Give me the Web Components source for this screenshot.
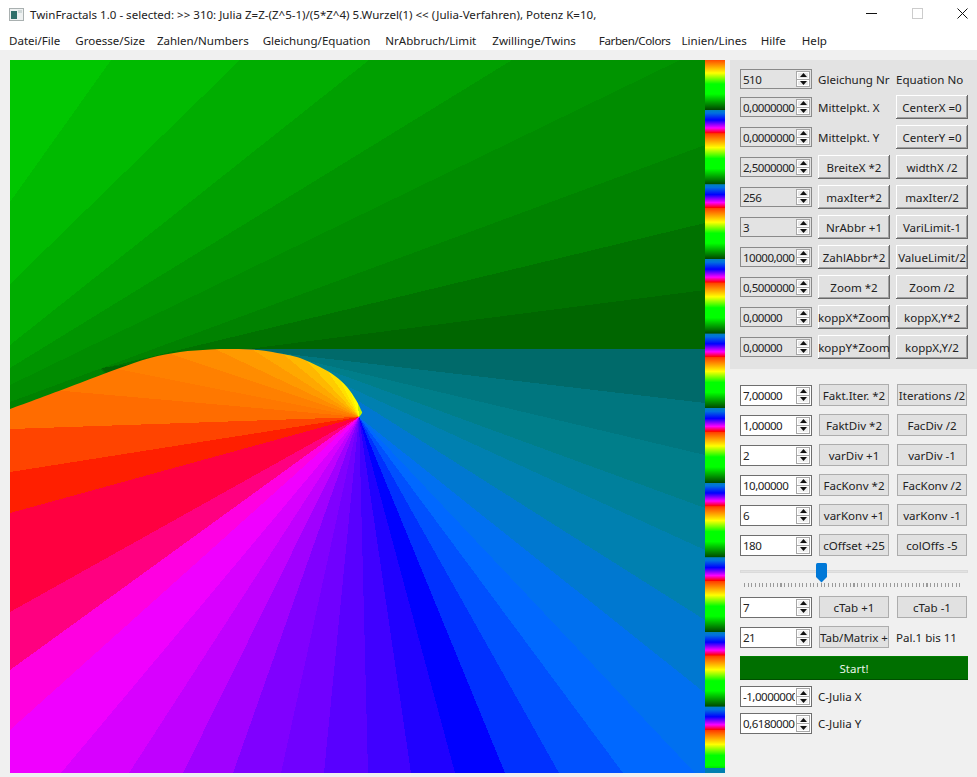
<!DOCTYPE html>
<html><head><meta charset="utf-8"><title>TwinFractals</title>
<style>html,body{margin:0;padding:0;background:#f0f0f0}</style></head>
<body><tf-window></tf-window>
<script>
const FONT = '"Noto Sans","Open Sans","Liberation Sans",sans-serif';
const FS = '11.55px';
class TfTitlebar extends HTMLElement{constructor(){super();this.attachShadow({mode:'open'}).innerHTML=`<style>
:host{display:flex;align-items:center;height:30px;background:#fff;color:#222;font:${FS} ${FONT};position:relative}
svg{display:block;flex:none}
.ic{margin:0 6px 2px 9px}.t{flex:1;white-space:nowrap;margin-bottom:2px}
.c{width:11px;height:11px;display:block;margin:0 0 4px 34.5px}
.c:last-child{margin-right:9px}
</style>
<svg class="ic" width="15" height="13" viewBox="0 0 15 13"><rect x=".5" y=".5" width="14" height="12" fill="#eef1f1" stroke="#a9b0b0"/><rect x="2" y="3" width="6" height="8" fill="#2f6f6a"/><rect x="9" y="2" width="4" height="3" fill="#cfd8d8"/></svg>
<span class="t"><slot></slot></span>
<svg class="c" width="11" height="11"><path d="M0 5.500H11" stroke="#111"/></svg>
<svg class="c" width="11" height="11"><rect x=".5" y=".5" width="10" height="10" fill="none" stroke="#ccc"/></svg>
<svg class="c" width="11" height="11"><path d="M.5.5L10.500 10.500M10.500.5L.5 10.500" stroke="#111" fill="none"/></svg>`}}
class TfMenubar extends HTMLElement{constructor(){super();this.attachShadow({mode:'open'}).innerHTML=`<style>
:host{display:flex;box-sizing:border-box;height:20px;background:#fff;color:#222;font:${FS}/20px ${FONT};padding:1px 0 0 9px;gap:16px;white-space:nowrap}
</style><slot></slot>`}}
class TfMenuItem extends HTMLElement{constructor(){super();this.attachShadow({mode:'open'}).innerHTML=`<style>:host{display:block}</style><slot></slot>`}}
class TfFractal extends HTMLElement{constructor(){super();
 const X0=10,Y0=60,R=705,B=773,A=[359,417];
 const pts=a=>a.map(p=>p.join(',')).join(' ');
 const poly=(a,c)=>`<polygon points="${pts(a)}" fill="${c}"/>`;
 let s='';
 s+=`<rect x="10" y="60" width="695" height="440" fill="#00c600"/>`;
 const green=[[[111,60],[10,202],'#00ba00'],[[240,60],[10,284],'#00ad00'],[[369,60],[10,345],'#00a000'],[[512,60],[10,368],'#009400'],[[680,60],[10,385],'#008c00'],[[705,145],[10,402],'#008200'],[[705,223],[100,369],'#007200'],[[705,290],[101,368],'#006600']];
 for(const [S,E,c] of green){const a=[S];if(S[1]===60)a.push([R,60]);a.push([R,349],[233,349],[233,500]);if(E[0]===X0)a.push([X0,500]);a.push(E);s+=poly(a,c)}
 s+=poly([[233,349],[R,349],[R,B],[233,B]],'#006a6a');
 const rays=[[[270,352],[R,403],'#00767f'],[[300,359],[R,455],'#007e8a'],[[320,367],[R,508],'#00809c'],[[340,383],[R,550],'#0080b0'],[[352,397],[R,620],'#0078d0'],[A,[R,693],'#0070f0']];
 const bottom=[[695,'#0068ff'],[623,'#0050ff'],[559,'#0030ff'],[505,'#0000ff'],[455,'#2000ff'],[411,'#4000ff'],[368,'#5800ff'],[324,'#7000ff'],[281,'#8000ff'],[233,'#a000ff'],[183,'#c000ff'],[129,'#d800ff'],[61,'#f000ff']];
 const left=[[730,'#ff00e0'],[670,'#ff0080'],[612,'#ff0040'],[513,'#ff1f00'],[472,'#ff4400'],[429,'#ff7000']];
 bottom.forEach(b=>rays.push([A,[b[0],B],b[1]]));
 left.forEach(l=>rays.push([A,[X0,l[0]],l[1]]));
 for(const [P,E,c] of rays){const a=[P,E];if(E[0]===R)a.push([R,B]);if(E[0]>X0)a.push([X0,B]);a.push([X0,417]);s+=poly(a,c)}
 const top=[[0,413],[10,409],[40,398],[80,383],[117,369],[150,358],[180,352],[210,349.500],[233,349],[258,350],[283,354],[300,358],[320,367],[335,376],[347,387],[356,400],[361,410],[362,413],A];
 let d=`M${top[0]}`;
 for(let i=0;i<top.length-1;i++){const p0=top[Math.max(i-1,0)],p1=top[i],p2=top[i+1],p3=top[Math.min(i+2,top.length-1)];
  d+=`C${p1[0]+(p2[0]-p0[0])/6} ${p1[1]+(p2[1]-p0[1])/6} ${p2[0]-(p3[0]-p1[0])/6} ${p2[1]-(p3[1]-p1[1])/6} ${p2[0]} ${p2[1]}`}
 d+='L0 429Z';
 const far=p=>{const k=8;return [A[0]+(p[0]-A[0])*k,A[1]+(p[1]-A[1])*k]};
 const marks=[[[10,429],'#ff6c00'],[[53,390],'#ff7800'],[[117,369],'#ff8000'],[[170,354],'#ff8c00'],[[215,349],'#ff9a00'],[[253,350],'#ffa800'],[[283,354],'#ffb800'],[[307,361],'#ffcc00'],[[327,370],'#ffe000'],[[340,380],'#fff000'],[[350,390],'#ffff00'],[[358,405],'#c0f000'],[[380,417],'#c0f000']];
 let g='';
 for(let i=0;i<marks.length-1;i++)g+=poly([A,far(marks[i][0]),far(marks[i+1][0])],marks[i][1]);
 s+=`<clipPath id="ar"><path d="${d}"/></clipPath><g clip-path="url(#ar)">${g}</g>`;
 this.attachShadow({mode:'open'}).innerHTML=`<style>:host{display:block;width:695px;height:713px;flex:none}svg{display:block}</style>
 <svg width="695" height="713" viewBox="10 60 695 713" shape-rendering="crispEdges">${s}</svg>`}}
class TfPalette extends HTMLElement{constructor(){super();this.attachShadow({mode:'open'}).innerHTML=`<style>
:host{display:block;width:20px;height:713px;flex:none;
background:linear-gradient(#0080b0,#0080b0) bottom/100% 5px no-repeat,
repeating-linear-gradient(180deg,#ff3c00 -1px,#ffff00 13px,#00ff00 24px,#00ff00 34px,#004a00 49.5px,#0080c0 50px,#0070e0 53px,#0000ff 60px,#ff00ff 68px,#ff0000 73px,#ff3c00 73.6px)}
</style>`}}
class TfSpin extends HTMLElement{constructor(){super();this.attachShadow({mode:'open'}).innerHTML=`<style>
:host{display:flex;box-sizing:border-box;width:72px;height:var(--spin-h,20px);border:1px solid var(--spin-bd,#8a8a8a);background:var(--spin-bg,#e3e3e3);color:#222;font:${FS}/1 ${FONT};letter-spacing:-.5px;flex:none;padding:1px 1px 1px 2px;align-items:stretch;overflow:hidden}
.v{flex:1;min-width:0;overflow:hidden;white-space:nowrap;display:flex;align-items:center;margin-right:1px;padding-top:1px}
.a{flex:none;width:14px;display:flex;flex-direction:column;gap:0}
.a span{flex:1;display:flex;align-items:center;justify-content:center;border:1px solid #a8a8a8;background:var(--arrow-bg,#f0f0f0);box-shadow:inset 0 0 0 1px #fff}
.a span+span{border-top:0}
svg{display:block}
</style><span class="v"><slot></slot></span><span class="a"><span><svg width="7" height="4"><path d="M3.500 0L7 4H0Z" fill="#111"/></svg></span><span><svg width="7" height="4"><path d="M0 0H7L3.500 4Z" fill="#111"/></svg></span></span>`}}
class TfBtn extends HTMLElement{constructor(){super();this.attachShadow({mode:'open'}).innerHTML=`<style>
:host{display:flex;align-items:center;justify-content:center;box-sizing:border-box;min-width:0;height:var(--btn-h,24px);padding-top:1px;background:#e1e1e1;color:#222;font:${FS}/1 ${FONT};white-space:nowrap;overflow:hidden;box-shadow:inset -1px -1px 0 #696969,inset 1px 1px 0 #fff,inset -2px -2px 0 #a0a0a0}
:host([flat]){box-shadow:none;border:1px solid #adadad;margin:0 1px}
:host([go]){box-shadow:none;background:#006f00;color:#e8f4e8;border-top:1px solid #007f00;border-bottom:1px solid #004f00}
</style><slot></slot>`}}
class TfLabel extends HTMLElement{constructor(){super();this.attachShadow({mode:'open'}).innerHTML=`<style>:host{display:block;color:#222;font:${FS}/1 ${FONT};white-space:nowrap;padding-top:1px}</style><slot></slot>`}}
class TfRow extends HTMLElement{constructor(){super();this.attachShadow({mode:'open'}).innerHTML=`<style>:host{display:grid;grid-template-columns:72px 72px 72px;column-gap:6px;align-items:center}
</style><slot></slot>`}}
class TfSlider extends HTMLElement{constructor(){super();this.attachShadow({mode:'open'}).innerHTML=`<style>
:host{display:block;position:relative;width:228px;height:27px;margin:6px 0 7px}
.tr{position:absolute;left:0;right:0;top:8px;height:3px;background:#e2e2e2;border:1px solid #dadada;box-sizing:border-box}
.th{position:absolute;left:76px;top:1px}
.tk{position:absolute;left:4px;right:6px;top:21px;height:4px;background:repeating-linear-gradient(90deg,#9a9a9a 0 1px,transparent 1px 3.65px)}
</style><div class="tr"></div><div class="tk"></div><svg class="th" width="11" height="20"><path d="M0 1.500Q0 0 1.500 0H9.500Q11 0 11 1.500V14L5.500 19.500L0 14Z" fill="#0078d7"/></svg>`}}
class TfPanel extends HTMLElement{constructor(){super();this.attachShadow({mode:'open'}).innerHTML=`<style>
:host{display:flex;flex-direction:column;gap:6px;background:#e3e3e3;padding:9px 0 10px 10px;--spin-h:20px;--arrow-bg:#e8e8e8}
</style><slot></slot>`}}
class TfControls extends HTMLElement{constructor(){super();this.attachShadow({mode:'open'}).innerHTML=`<style>
:host{display:block;padding:15px 0 0 10px;--spin-h:21px;--spin-bd:#6e6e6e;--spin-bg:#fff;--btn-h:22px;--arrow-bg:#f0f0f0}
</style><slot></slot>`}}
class TfGroup extends HTMLElement{constructor(){super();this.attachShadow({mode:'open'}).innerHTML=`<style>
:host{display:flex;flex-direction:column;gap:var(--g,8px)}
</style><slot></slot>`}}
class TfWindow extends HTMLElement{constructor(){super();
 const r=(sp,a,b,fl)=>{const cell=(x)=>{if(x==='')return '<span></span>';if(x[0]==='~')return `<tf-label>${x.slice(1)}</tf-label>`;return `<tf-btn${fl?' flat':''}>${x}</tf-btn>`};return `<tf-row><tf-spin>${sp}</tf-spin>${cell(a)}${cell(b)}</tf-row>`};
 this.attachShadow({mode:'open'}).innerHTML=`<style>
:host{display:block;width:977px;height:777px;overflow:hidden;background:#f0f0f0}
.main{display:flex;padding:10px 0 0 10px}
.side{width:247px;margin-left:5px;flex:none}
</style>
<tf-titlebar>TwinFractals 1.0 - selected: &gt;&gt; 310: Julia Z=Z-(Z^5-1)/(5*Z^4) 5.Wurzel(1) &lt;&lt; (Julia-Verfahren), Potenz K=10,</tf-titlebar>
<tf-menubar><tf-menu-item style="margin-right:-1px">Datei/File</tf-menu-item><tf-menu-item style="margin-right:-4px">Groesse/Size</tf-menu-item><tf-menu-item style="margin-right:-2px">Zahlen/Numbers</tf-menu-item><tf-menu-item style="margin-right:-1px">Gleichung/Equation</tf-menu-item><tf-menu-item>NrAbbruch/Limit</tf-menu-item><tf-menu-item style="margin-right:7px">Zwillinge/Twins</tf-menu-item><tf-menu-item style="letter-spacing:-.4px;margin-right:-5px">Farben/Colors</tf-menu-item><tf-menu-item style="margin-right:-2px">Linien/Lines</tf-menu-item><tf-menu-item>Hilfe</tf-menu-item><tf-menu-item>Help</tf-menu-item></tf-menubar>
<div class="main"><tf-fractal></tf-fractal><tf-palette></tf-palette>
<div class="side">
<tf-panel>
${r('510','~Gleichung Nr','~Equation No')}
${r('0,00000000','~Mittelpkt. X','CenterX =0')}
${r('0,00000000','~Mittelpkt. Y','CenterY =0')}
${r('2,50000000','BreiteX *2','widthX /2')}
${r('256','maxIter*2','maxIter/2')}
${r('3','NrAbbr +1','VariLimit-1')}
${r('10000,0000','ZahlAbbr*2','ValueLimit/2')}
${r('0,50000000','Zoom *2','Zoom /2')}
${r('0,00000','koppX*Zoom','koppX,Y*2')}
${r('0,00000','koppY*Zoom','koppX,Y/2')}
</tf-panel>
<tf-controls>
<tf-group>
${r('7,00000','Fakt.Iter. *2','Iterations /2',1)}
${r('1,00000','FaktDiv *2','FacDiv /2',1)}
${r('2','varDiv +1','varDiv -1',1)}
${r('10,00000','FacKonv *2','FacKonv /2',1)}
${r('6','varKonv +1','varKonv -1',1)}
${r('180','cOffset +25','colOffs -5',1)}
</tf-group>
<tf-slider></tf-slider>
<tf-group style="margin-bottom:8px">
${r('7','cTab +1','cTab -1',1)}
${r('21','Tab/Matrix +','~Pal.1 bis 11',1)}
</tf-group>
<tf-group style="--g:6px">
<tf-btn go style="--btn-h:24px;width:228px">Start!</tf-btn>
${r('-1,00000000','~C-Julia X','')}
${r('0,61800000','~C-Julia Y','')}
</tf-group>
</tf-controls>
</div></div>`}}
const defs={'tf-titlebar':TfTitlebar,'tf-menubar':TfMenubar,'tf-menu-item':TfMenuItem,'tf-fractal':TfFractal,'tf-palette':TfPalette,'tf-spin':TfSpin,'tf-btn':TfBtn,'tf-label':TfLabel,'tf-row':TfRow,'tf-slider':TfSlider,'tf-panel':TfPanel,'tf-controls':TfControls,'tf-group':TfGroup,'tf-window':TfWindow};
for(const k in defs)customElements.define(k,defs[k]);
</script></body></html>
